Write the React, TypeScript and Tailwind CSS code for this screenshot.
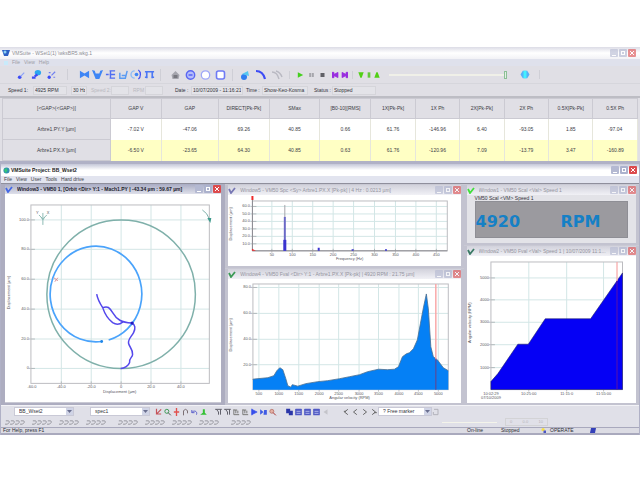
import React from "react";

type Glyph = { label: string; art: React.ReactNode };

function IconButton({ label, size, children }: { label: string; size: string; children: React.ReactNode }) {
  return (
    <button type="button" aria-label={label} className={`${size} flex shrink-0 items-center justify-center`}>
      <svg viewBox="0 0 12 12" className="h-full w-full" fill="none">
        {children}
      </svg>
    </button>
  );
}

function Group({ items, size, className }: { items: Glyph[]; size: string; className: string }) {
  return (
    <div className={`flex shrink-0 items-center ${className}`}>
      {items.map((g) => (
        <IconButton key={g.label} label={g.label} size={size}>
          {g.art}
        </IconButton>
      ))}
    </div>
  );
}

const B = "#3d4cf5";
const S = "#3f86f5";

const fileIcons: Glyph[] = [
  { label: "Signal", art: <><circle cx="4" cy="9" r="2" fill={B} /><path d="M5 8 9 4" stroke="#8aa0f8" strokeWidth="1.2" /></> },
  { label: "Channel", art: <><ellipse cx="7.500" cy="4" rx="3.500" ry="2.800" fill="#2aa7ee" /><path d="M1 9.500h4M4 8 7 6" stroke={B} strokeWidth="2.500" /></> },
  { label: "Link", art: <><circle cx="3.500" cy="9" r="1.8" fill={B} /><path d="M3 4h2M6 7l4-4M8 9h2" stroke="#6f7ff0" strokeWidth="1.300" /></> },
];
const plotIcons: Glyph[] = [
  { label: "Spectrum", art: <path d="M1 2v8l5-3 5 3V2L6 5z" fill={S} /> },
  { label: "Waterfall", art: <path d="M0 1l3 1 1 3h4l1-3 3-1-2 5-2 5H4L2 6z" fill={S} /> },
  { label: "Bode", art: <path d="M5 2h6M5 6h6M5 10h6M1 6h3M6 2v8" stroke="#4f6df2" strokeWidth="1.500" /> },
  { label: "Trend", art: <path d="M2 4v6h6l2-8M4 7h4" stroke="#5b9bf2" strokeWidth="1.600" /> },
  { label: "Polar", art: <><path d="M4 2a4 4 0 1 0 0 8" stroke="#8cbcf6" strokeWidth="1.500" /><circle cx="6" cy="6" r="2" fill={S} /><path d="M8 1c3 2 3 8 0 10" stroke={B} strokeWidth="1.300" /></> },
  { label: "Frame", art: <path d="M1 3h10M3 3v7M9 3v7M1 9h3M8 9h3" stroke="#4c78f4" strokeWidth="1.800" /> },
];
const shapeIcons: Glyph[] = [
  { label: "Home", art: <><path d="M6 2l4 4-1 4H3L2 6z" fill="#a5a5ad" /><path d="M4 6h4v3H4z" fill="#77777f" /></> },
  { label: "Orbit", art: <><circle cx="6" cy="6" r="4.200" fill="#b5bdfb" stroke="#5a66f2" strokeWidth="1.400" /><path d="M4 6h4" stroke={B} strokeWidth="1.200" /></> },
  { label: "Circle", art: <circle cx="6" cy="6" r="4.200" fill="#fff" stroke="#9ea7f8" strokeWidth="1.300" /> },
  { label: "Square", art: <rect x="2" y="2" width="8" height="8" rx="2" fill="#fff" stroke="#6f7bf5" strokeWidth="1.600" /> },
];
const curveIcons: Glyph[] = [
  { label: "Globe", art: <><circle cx="5" cy="8" r="3" fill="#2f7df0" /><path d="M3 5l6-3 1 5z" fill="#57c7f0" /></> },
  { label: "Curve", art: <path d="M1 2c5 0 8 4 9 8" stroke={B} strokeWidth="2.200" /> },
  { label: "Curves", art: <path d="M1 3c4 0 6 3 7 7M5 2c3 1 5 3 6 6" stroke="#b9b9c2" strokeWidth="1.400" /> },
];
const runIcons: Glyph[] = [
  { label: "Start", art: <path d="M2 2l8 4-8 4z" fill="#44cf1e" /> },
  { label: "Pause", art: <path d="M4 3v6M8 3v6" stroke="#a6a6ac" strokeWidth="3" /> },
  { label: "Stop", art: <rect x="3" y="3" width="6" height="6" fill="#606066" /> },
];
const skipIcons: Glyph[] = [
  { label: "Backward", art: <path d="M0 2h3v3l6-3v8L3 7v3H0z" fill="#9a2fe0" stroke="#9a2fe0" /> },
  { label: "Forward", art: <path d="M12 2H9v3L3 2v8l6-3v3h3z" fill="#9a2fe0" stroke="#9a2fe0" /> },
];
const levelIcons: Glyph[] = [
  { label: "Lower", art: <path d="M2 2h8L7 10H5z" fill="#52d016" /> },
  { label: "Middle", art: <path d="M4 2h4v8H4z" fill="#62c83a" /> },
  { label: "Raise", art: <path d="M2 10h8L7 2H5z" fill="#52d016" /> },
];
const markIcons: Glyph[] = [
  { label: "Axes", art: <path d="M3 1v8h7M4 8l6-6" stroke="#c55259" strokeWidth="1.800" /> },
  { label: "Zoom", art: <><circle cx="5" cy="5" r="3" stroke="#3f9b58" strokeWidth="1.500" /><path d="M7 7l4 4" stroke="#555" strokeWidth="1.500" /></> },
  { label: "Move", art: <path d="M6 0v12M2 6h8" stroke="#e1504e" strokeWidth="2" /> },
  { label: "Arch", art: <path d="M3 11V4q3-4 6 0v4" stroke="#7b6f74" strokeWidth="1.500" /> },
  { label: "Undo", art: <path d="M2 3v4h4M2 7c2-4 9-3 7 3" stroke="#5d62cc" strokeWidth="1.500" /> },
  { label: "Peak", art: <path d="M1 10h10L8 7V2H5v5z" fill="#35c136" /> },
];
const axisArt = (c: string) => <path d="M2 2v8h8M5 3v5M8 4v4M2 3h5" stroke={c} strokeWidth="1.400" />;
const axisIcons: Glyph[] = [
  { label: "Scale left", art: <path d="M1 2h10M3 2l3 4v4M9 2v8" stroke="#61616b" strokeWidth="1.500" /> },
  { label: "Scale right", art: <path d="M1 2h10M3 2l3 4v4M9 2v8" stroke="#61616b" strokeWidth="1.500" /> },
  { label: "Scale up", art: axisArt("#72726f") },
  { label: "Scale down", art: axisArt("#72726f") },
  { label: "Play marker", art: <path d="M2 1v10M2 2l8 4-8 4z" fill="#3850ec" stroke="#3850ec" /> },
  { label: "Link marker", art: <path d="M1 2l5 4-5 4zM7 3h4v7H6z" fill="#3f5be4" /> },
  { label: "Find", art: <><circle cx="5" cy="5" r="3" fill="#e3b0a5" stroke="#ad6257" /><path d="M7 7l4 4" stroke="#a33" strokeWidth="1.500" /></> },
];
const windowArt = <><rect x="1" y="1" width="10" height="10" rx="1" fill="#5059c4" /><path d="M3 5h6M3 8h6" stroke="#d8dcfa" /></>;
const windowIcons: Glyph[] = [
  { label: "Cascade", art: <path d="M1 1h6v3h4v7H5V8H1z" fill="#2b36a8" /> },
  { label: "Tile", art: windowArt },
  { label: "Tile rows", art: windowArt },
  { label: "Tile columns", art: windowArt },
  { label: "Mute", art: <path d="M9 2v8L3 6z" fill="#c4c4ca" /> },
];
const stepIcons: Glyph[] = [
  { label: "First", art: <path d="M8 2L3 6l5 4M2 5h3" stroke="#666" strokeWidth="1.500" /> },
  { label: "Previous", art: <path d="M8 2L3 6l5 4" stroke="#666" strokeWidth="1.500" /> },
  { label: "Next", art: <path d="M4 2l5 4-5 4" stroke="#666" strokeWidth="1.500" /> },
  { label: "Last", art: <path d="M4 2l5 4-5 4M7 7h4" stroke="#666" strokeWidth="1.500" /> },
];

function WindowButtons({ dim = false }: { dim?: boolean }) {
  return (
    <div className={`flex shrink-0 gap-px ${dim ? "opacity-60" : ""}`}>
      <button type="button" aria-label="Minimize" className="flex h-2 w-2 items-end justify-center rounded-[1px] bg-[#b4b9d2] p-px">
        <span className="h-px w-1 bg-white" />
      </button>
      <button type="button" aria-label="Maximize" className="flex h-2 w-2 items-center justify-center rounded-[1px] bg-[#acb2cd]">
        <span className="h-1 w-1 border border-white" />
      </button>
      <button type="button" aria-label="Close" className="flex h-2 w-2 items-center justify-center rounded-[1px] bg-[#dc4a4c]">
        <svg viewBox="0 0 6 6" className="h-1 w-1" stroke="#fff" strokeWidth="1.500">
          <path d="M0 0l6 6M6 0L0 6" />
        </svg>
      </button>
    </div>
  );
}

function MdiWindow({ title, active = false, icon, children }: { title: string; active?: boolean; icon: string; children: React.ReactNode }) {
  return (
    <section className={`flex min-w-0 flex-col border-b-2 ${active ? "border-x-4 border-[#adadc0]" : "border-x-[3px] border-[#c3c3d0]"}`}>
      <header
        className={`flex h-[10px] shrink-0 items-center gap-1 ${
          active ? "bg-linear-to-b from-[#a9acc4] to-[#dfe0ea] font-bold text-[#20202c]" : "bg-linear-to-b from-[#d2d2dc] to-[#f1f1f6] text-[#94949e]"
        }`}
      >
        <svg viewBox="0 0 8 8" className="h-2 w-2 shrink-0" fill="none">
          <path d="M1 3l2 4 4-5" stroke={icon} strokeWidth="1.800" />
        </svg>
        <h2 className="min-w-0 flex-1 truncate leading-[8px]">{title}</h2>
        <WindowButtons dim={!active} />
      </header>
      {children}
    </section>
  );
}

const plotFont = "fill-[#55555c] text-[4px]";

function Ticks({ xs, ys, left, right, top, bottom, color = "#d3e6e6" }: { xs: number[]; ys: number[]; left: number; right: number; top: number; bottom: number; color?: string }) {
  return (
    <g>
      {xs.map((x) => <path key={`x${x}`} d={`M${x} ${top}V${bottom}`} stroke={color} />)}
      {ys.map((y) => <path key={`y${y}`} d={`M${left} ${y}H${right}`} stroke={color} />)}
      {xs.map((x) => <path key={`tx${x}`} d={`M${x} ${bottom - 2}v4`} stroke="#98989e" strokeWidth="0.600" />)}
      {ys.map((y) => <path key={`ty${y}`} d={`M${left - 2} ${y}h6`} stroke="#98989e" strokeWidth="0.600" />)}
      <rect x={left} y={top} width={right - left} height={bottom - top} fill="none" stroke="#bcbcc0" />
    </g>
  );
}

function Labels({ values, at, side }: { values: string[]; at: number[]; side: { x: number } | { y: number } }) {
  return (
    <g className={plotFont}>
      {values.map((v, i) =>
        "x" in side ? (
          <text key={v + i} x={side.x} y={at[i] + 1} textAnchor="end">{v}</text>
        ) : (
          <text key={v + i} x={at[i]} y={side.y} textAnchor="middle">{v}</text>
        ),
      )}
    </g>
  );
}

function OrbitPlot() {
  const xs = [60.5, 90.5, 120.5, 150.5, 180.5];
  const ys = [220, 249.5, 279.5, 309.5, 339.5, 369];
  return (
    <svg viewBox="4 194 217 209" className="block w-full bg-white" fill="none">
      <Ticks xs={xs} ys={ys} left={30} right={209} top={205} bottom={384} />
      <Labels values={["100.0", "80.0", "60.0", "40.0", "20.0", "0"]} at={ys} side={{ x: 28 }} />
      <Labels values={["-60.0", "-40.0", "-20.0", "0", "20.0", "40.0"]} at={[31, ...xs]} side={{ y: 389 }} />
      <text x="119" y="394" textAnchor="middle" className={plotFont}>Displacement (µm)</text>
      <text transform="translate(9 293) rotate(-90)" textAnchor="middle" className={plotFont}>Displacement (µm)</text>
      <circle cx="120.500" cy="294.500" r="74.500" stroke="#7fb0aa" strokeWidth="1.500" />
      <path d="M101 342A46 48 0 1 1 108 340.500" stroke="#4aa3fb" strokeWidth="1.700" />
      <circle cx="101" cy="342" r="1.400" fill="#1f86e8" />
      <path
        d="M96 294.500C97 300 100 305 102 308C107 306 109 308 112 313C116 320 121 323 131 323.500C135 325 135 329 133 333C131 337 127 340 128 344C129 348 132 349 132 355C132 358 128 359 129 363C128 366 124 369 120 369M102 308C104 314 108 320 112 323C115 325 119 325 122 322.500"
        stroke="#5448ec"
        strokeWidth="1.500"
      />
      <circle cx="131.500" cy="323.500" r="1.600" fill="#2419c0" />
      <path d="M53 278l4 3M54 282l3-4" stroke="#dc8f96" />
      <path d="M42 213v12M38 215l4 4 4-4M40 217l2 3 2-3" stroke="#8fbcb5" />
      <text x="35" y="214" className={plotFont}>Y</text>
      <text x="46" y="214" className={plotFont}>X</text>
      <path d="M202 210q5 3 7 9" stroke="#7fb0aa" />
      <path d="M207 218h4l-1 5z" fill="#3e9a8c" />
    </svg>
  );
}

function SpectrumPlot() {
  const xs = [272, 292.5, 313, 333.5, 354, 375, 396, 416.5, 437];
  const ys = [206.5, 214, 221.5, 229, 236.5, 244];
  return (
    <svg viewBox="228 195 233 71" className="block w-full bg-white" fill="none">
      <Ticks xs={xs} ys={ys} left={252.5} right={448} top={201} bottom={251} />
      <Labels values={["60.0", "50.0", "40.0", "30.0", "20.0", "10.0"]} at={ys} side={{ x: 250 }} />
      <Labels values={["50", "100", "150", "200", "250", "300", "350", "400", "450"]} at={xs} side={{ y: 256 }} />
      <text x="350" y="260" textAnchor="middle" className={plotFont}>Frequency (Hz)</text>
      <text transform="translate(232 224) rotate(-90)" textAnchor="middle" className={plotFont}>Displacement (µm)</text>
      <path d="M252.500 200V251H448" stroke="#8c8c92" />
      <path d="M285 205v13" stroke="#a5a5aa" />
      <path d="M285 217v34" stroke="#6a69c6" strokeWidth="2" />
      <path d="M285 240v11" stroke="#3a34cf" strokeWidth="3" />
      <path d="M319 248v3M353 249.500v1.500M386.500 249.500v1.500" stroke="#3a34cf" strokeWidth="2" />
      <path d="M252.500 196v4" stroke="#ee2a2a" strokeWidth="2" />
      <path d="M252 249l4 2h-4z" fill="#ee2a2a" />
    </svg>
  );
}

function BodePlot() {
  const xs = [259, 279, 299, 319.5, 339, 359.5, 379, 399.5, 419, 439];
  const ys = [287.5, 313.5, 339.5, 365];
  const curve =
    "V379.500L268 378L274 376L277 371L280 368L283 370L286 379L288 386L291 387.500L292.500 385L298 386.500L306 384L318 382L328 381L340 379L350 377L360 375L368 372L379 369.500L388 370L395 369.500L399 367L403 357L407 354L410 353L414 349L418 340L421 324L424 308L427 294L429 309L431.500 347L434 357L438 360L444 368L449 371";
  return (
    <svg viewBox="228 279 233 124" className="block w-full bg-white" fill="none">
      <Ticks xs={xs} ys={ys} left={253} right={449} top={284} bottom={390} />
      <Labels values={["80.0", "60.0", "40.0", "20.0"]} at={ys} side={{ x: 251 }} />
      <Labels values={["500", "1000", "1500", "2000", "2500", "3000", "3500", "4000", "4500", "5000"]} at={xs} side={{ y: 395 }} />
      <text x="350" y="399" textAnchor="middle" className={plotFont}>Angular velocity (RPM)</text>
      <text transform="translate(232 335) rotate(-90)" textAnchor="middle" className={plotFont}>Displacement (µm)</text>
      <path d={`M253 390${curve}V390Z`} fill="#0580f5" />
      <path d={`M253 380${curve}`} stroke="#4a6f90" strokeWidth="0.800" />
      <path d="M436.500 284v76" stroke="#f9a3a3" strokeWidth="1.400" />
      <path d="M436.500 359v31" stroke="#5a4a98" strokeWidth="1.200" />
    </svg>
  );
}

function SpeedPlot() {
  const xs = [529, 567, 604];
  const ys = [278, 300, 322.5, 345, 368];
  return (
    <svg viewBox="467 256 170 147" className="block w-full bg-white" fill="none">
      <Ticks xs={xs} ys={ys} left={491} right={623} top={262} bottom={390} />
      <Labels values={["5000", "4000", "3000", "2000", "1000"]} at={ys} side={{ x: 489 }} />
      <Labels values={["10:02:29", "10:25:00", "11:15:0", "11:55:00"]} at={[491, ...xs]} side={{ y: 395 }} />
      <text x="491" y="399" textAnchor="middle" className={plotFont}>07/10/2009</text>
      <text transform="translate(471 323) rotate(-90)" textAnchor="middle" className={plotFont}>Angular velocity (RPM)</text>
      <path d="M491 390V382L498 374L518 344.500H528.500L545.500 319H591L623 273V390Z" fill="#0500f5" stroke="#20206a" strokeWidth="0.600" />
      <path d="M617.500 262v19" stroke="#f7a6a6" strokeWidth="1.200" />
      <path d="M617.500 281v109" stroke="#5a12a8" strokeWidth="1" />
    </svg>
  );
}

const columns = [
  { name: "[<GAP>(<GAP>)]", width: "w-[17%]" },
  { name: "GAP V", width: "w-[8%]" },
  { name: "GAP", width: "w-[9%]" },
  { name: "DIRECT[Pk-Pk]", width: "w-[8%]" },
  { name: "SMax", width: "w-[8%]" },
  { name: "[B0-10][RMS]", width: "w-[8%]" },
  { name: "1X[Pk-Pk]", width: "w-[7%]" },
  { name: "1X Ph", width: "w-[7%]" },
  { name: "2X[Pk-Pk]", width: "w-[7%]" },
  { name: "2X Ph", width: "w-[7%]" },
  { name: "0.5X[Pk-Pk]", width: "w-[7%]" },
  { name: "0.5X Ph", width: "w-[7%]" },
];
const rows = [
  { name: "Arbre1.PY.Y [µm]", tone: "bg-white", cells: ["-7.02 V", "-47.06", "69.26", "40.85", "0.66", "61.76", "-146.96", "6.40", "-93.05", "1.85", "-97.04"] },
  { name: "Arbre1.PX.X [µm]", tone: "bg-[#ffffc4]", cells: ["-6.50 V", "-23.65", "64.30", "40.85", "0.63", "61.76", "-120.96", "7.09", "-13.79", "3.47", "-160.89"] },
];

function ReadingsTable() {
  return (
    <table className="w-full table-fixed border-collapse text-center text-[5px] leading-none text-[#3c3c44]">
      <thead>
        <tr className="h-5 bg-[#e0dfe5]">
          {columns.map((c) => (
            <th key={c.name} scope="col" className={`${c.width} border border-[#cbcad2] font-normal whitespace-nowrap`}>{c.name}</th>
          ))}
        </tr>
      </thead>
      <tbody>
        {rows.map((r) => (
          <tr key={r.name} className={`h-[21px] ${r.tone}`}>
            <th scope="row" className="border border-[#cbcad2] bg-[#e0dfe5] font-normal">{r.name}</th>
            {r.cells.map((c, i) => (
              <td key={i} className="border-x border-[#e6e6dc]">{c}</td>
            ))}
          </tr>
        ))}
      </tbody>
    </table>
  );
}

function Field({ label, value, labelWidth, width, muted = false }: { label: string; value: string; labelWidth: string; width: string; muted?: boolean }) {
  return (
    <label className={`flex shrink-0 items-center ${muted ? "text-[#b9b9c0]" : "text-[#33333b]"}`}>
      <span className={`${labelWidth} whitespace-nowrap`}>{label}</span>
      <input readOnly defaultValue={value} className={`${width} h-[9px] border border-[#d5d5da] bg-[#e3e3e8] px-px`} />
    </label>
  );
}

function Combo({ label, value, width }: { label: string; value: string; width: string }) {
  return (
    <div className={`${width} flex h-[9px] shrink-0 items-center border border-[#c9c9d6] bg-white`}>
      <select aria-label={label} defaultValue={value} className="h-[7px] min-w-0 flex-1 appearance-none bg-white pl-1 text-[5px] leading-[7px] text-[#33333b]">
        <option>{value}</option>
      </select>
      <svg viewBox="0 0 7 7" className="h-[7px] w-[7px] shrink-0 bg-[#d0d4e6]">
        <path d="M1 2h5L3.500 5z" fill="#6a6f90" />
      </svg>
    </div>
  );
}

const stampGroups = ["ml-1", "ml-[7px]", "ml-[7px]", "ml-[7px]", "ml-3", "ml-[7px]", "ml-[7px]", "ml-[7px]", "ml-3"];

function StampRow() {
  return (
    <div className="flex h-[9px] items-center">
      {stampGroups.map((gap, g) => (
        <div key={g} className={`${gap} flex shrink-0`}>
          {[0, 1, 2, 3].map((i) => (
            <button key={i} type="button" aria-label={`Preset ${g * 4 + i + 1}`} className="h-[5px] w-[5px]">
              <svg viewBox="0 0 6 6" className="h-full w-full" fill="none" stroke="#8a8a92">
                <path d="M1 1h3q1.500 0 1 2L3 5H0" />
              </svg>
            </button>
          ))}
        </div>
      ))}
      <input type="range" aria-label="Position" className="ml-[191px] h-px w-[55px] appearance-none bg-[#f4f4ea] [&::-webkit-slider-thumb]:appearance-none" />
      <div className="ml-2 flex h-2 w-[43px] shrink-0 items-center justify-between border border-[#d3d3d6] px-1 text-[4px] text-[#b4b4b8]">
        <span>0</span>
        <span>0.0</span>
        <span>10</span>
      </div>
    </div>
  );
}

export default function App() {
  return (
    <div className="min-h-screen bg-white pt-[47px] font-['Liberation_Sans',Arial,sans-serif] text-[5px] leading-none">
      <section className="bg-[#e0dfe5]">
        <header className="flex h-3 items-center gap-[2px] bg-linear-to-b from-[#dcdce6] via-white to-[#f2f2f6] pr-1 pl-[2px] text-[#8c8c94]">
          <svg viewBox="0 0 8 8" className="h-2 w-2 shrink-0">
            <path d="M0 1h8L6 7H2z" fill="#2b5fc4" />
            <circle cx="3" cy="3" r="1.500" fill="#8ad0f4" />
          </svg>
          <h1 className="flex-1">VMSuite - WSet1(1) \wksBR5.wkg.1</h1>
          <WindowButtons dim />
        </header>
        <nav className="flex h-[7px] items-center gap-1 bg-[#dfe1ec] pl-1 text-[#9d9da6]">
          <span className="h-1 w-1 bg-[#c9eafa]" />
          <button type="button">File</button>
          <button type="button">View</button>
          <button type="button">Help</button>
        </nav>
        <div className="flex h-[17px] items-center">
          <Group items={fileIcons} size="h-[11px] w-[15px]" className="ml-[14px]" />
          <Group items={plotIcons} size="h-[11px] w-[13px]" className="ml-2 border-l border-[#cfcfd6] pl-[10px]" />
          <Group items={shapeIcons} size="h-3 w-[15px]" className="ml-1 border-l border-[#cfcfd6] pl-[7px]" />
          <Group items={curveIcons} size="h-3 w-4" className="ml-1 border-l border-[#cfcfd6] pl-1" />
          <Group items={runIcons} size="h-2 w-[11px]" className="ml-1 border-l border-[#cfcfd6] pl-[5px]" />
          <Group items={skipIcons} size="h-2 w-2" className="ml-1" />
          <Group items={levelIcons} size="h-2 w-2" className="ml-1 border-l border-[#cfcfd6] pl-1" />
          <input
            type="range"
            aria-label="Time position"
            defaultValue={100}
            className="ml-2 h-2 w-[118px] appearance-none border-y-[3px] border-[#e0dfe5] bg-[#f0f0e8] [&::-webkit-slider-thumb]:h-2 [&::-webkit-slider-thumb]:w-[3px] [&::-webkit-slider-thumb]:appearance-none [&::-webkit-slider-thumb]:border [&::-webkit-slider-thumb]:border-[#8cc096] [&::-webkit-slider-thumb]:bg-[#e6efe6]"
          />
          <div className="ml-3 flex border-r border-[#cfcfd6] pr-2">
            <IconButton label="Record" size="h-[9px] w-3">
              <path d="M3 1h6l3 5-3 5H3L0 6z" fill="#55b2f8" />
              <path d="M6 1v10" stroke="#43f1ff" strokeWidth="4" />
            </IconButton>
          </div>
        </div>
        <div className="flex h-[13px] items-center border-t border-[#d6d6dc] pl-2">
          <Field label="Speed 1:" value="4925 RPM" labelWidth="w-[25px]" width="w-[34px]" />
          <div className="ml-1"><Field label="" value="30 Hz" labelWidth="w-0" width="w-4" /></div>
          <div className="ml-1"><Field label="Speed 2:" value="" labelWidth="w-5" width="w-[18px]" muted /></div>
          <div className="ml-1"><Field label="RPM" value="" labelWidth="w-3" width="w-[18px]" muted /></div>
          <div className="ml-3"><Field label="Date :" value="10/07/2009 - 11:16:21" labelWidth="w-4" width="w-[52px]" /></div>
          <div className="ml-[3px]"><Field label="Time :" value="Show-Keo-Kosma" labelWidth="w-4" width="w-[46px]" /></div>
          <div className="ml-[6px]"><Field label="Status :" value="Stopped" labelWidth="w-[18px]" width="w-[44px]" /></div>
        </div>
        <div className="border-t-2 border-[#bdbdc4] px-[2px]">
          <ReadingsTable />
        </div>
      </section>

      <section className="border-x border-t-[3px] border-[#b0b1c6] bg-[#e0e0e8]">
        <header className="flex h-3 items-center gap-px bg-linear-to-b from-[#c5c7d8] via-white to-white pr-[2px] pl-[2px] text-[#222]">
          <svg viewBox="0 0 8 8" className="h-[7px] w-[7px] shrink-0">
            <circle cx="4" cy="4" r="3.500" fill="#2f8fb0" />
            <path d="M1 3l3-2 1 3-2 3z" fill="#35c777" />
          </svg>
          <h1 className="flex-1 font-bold">VMSuite Project: BB_Wset2</h1>
          <WindowButtons />
        </header>
        <nav className="flex h-[7px] items-center gap-1 bg-[#e2e4ef] pl-[3px] text-[#3f3f48]">
          <button type="button">File</button>
          <button type="button">View</button>
          <button type="button">User</button>
          <button type="button">Tools</button>
          <button type="button">Hard drive</button>
        </nav>

        <main className="grid grid-cols-[minmax(0,225fr)_minmax(0,239fr)_minmax(0,176fr)] border-t border-[#8f8f9c] bg-[#c9c9d4]">
          <MdiWindow active icon="#4468e6" title="Window3 - VM50 1, [Orbit <Dir> Y:1 - Mach1.PY | -43.34 µm : 59.67 µm]">
            <OrbitPlot />
          </MdiWindow>
          <div className="flex min-w-0 flex-col justify-between gap-px pt-px">
            <MdiWindow icon="#7777b4" title="Window5 - VM50 Spc <Sy> Arbre1.PX.X [Pk-pk] | 4 Hz : 0.0213 µm]">
              <SpectrumPlot />
            </MdiWindow>
            <MdiWindow icon="#3b9a56" title="Window4 - VM50 Fval <Dir> Y:1 - Arbre1.PX.X [Pk-pk] | 4920 RPM : 21.75 µm]">
              <BodePlot />
            </MdiWindow>
          </div>
          <div className="flex min-w-0 flex-col justify-between gap-px pt-px">
            <MdiWindow icon="#41e03c" title="Window1 - VM50 Scal <Val> Speed 1">
              <div className="flex flex-col bg-[#e3e3e8] px-2 pt-px pb-[5px]">
                <h3 className="h-[5px] text-[5px] text-[#33333b]">VM50 Scal &lt;VM&gt; Speed 1</h3>
                <div className="flex h-[37px] items-center border border-[#8e8e95] bg-[#9b9a9f] pt-[5px] font-['DejaVu_Sans',sans-serif] text-[16px] font-bold text-[#1580c6]">
                  <span className="w-[85px]">4920</span>
                  <span>RPM</span>
                </div>
              </div>
            </MdiWindow>
            <MdiWindow icon="#3b7a66" title="Window2 - VM50 Fval <Val> Speed 1 | 10/07/2009 11:1...">
              <SpeedPlot />
            </MdiWindow>
          </div>
        </main>

        <div className="flex h-[13px] items-center border-t border-[#f2f2f6]">
          <div className="ml-[13px]"><Combo label="Project" value="BB_Wset2" width="w-[60px]" /></div>
          <div className="ml-4"><Combo label="View" value="spec1" width="w-[60px]" /></div>
          <Group items={markIcons} size="h-2 w-[9px]" className="ml-1" />
          <Group items={axisIcons} size="h-2 w-[9px]" className="ml-[6px]" />
          <Group items={windowIcons} size="h-2 w-[9px]" className="ml-2" />
          <Group items={stepIcons} size="h-2 w-[9px]" className="ml-3" />
          <Combo label="Marker" value="? Free marker" width="w-[54px]" />
          <IconButton label="Edit marker" size="h-2 w-2">
            <path d="M3 2h6v8H2V6" stroke="#b2b2bb" strokeWidth="1.500" />
          </IconButton>
        </div>
        <StampRow />
        <footer className="flex h-2 items-center border-t border-b-2 border-[#a9a9bd] bg-[#dcdce4] pl-[2px] text-[#2b2b33]">
          <span className="w-[464px]">For Help, press F1</span>
          <span className="w-[34px]">On-line</span>
          <span className="w-[40px]">Stopped</span>
          <svg viewBox="0 0 6 6" className="mr-1 h-[5px] w-[5px]">
            <circle cx="2.500" cy="2" r="2" fill="#f4dd48" />
            <path d="M3 3h3v3H3z" fill="#4a55c4" />
          </svg>
          <span className="w-10">OPERATE</span>
          <svg viewBox="0 0 6 5" className="h-[5px] w-[6px]">
            <path d="M1 0h5L5 5H0z" fill="#3440b8" />
          </svg>
        </footer>
      </section>
    </div>
  );
}
